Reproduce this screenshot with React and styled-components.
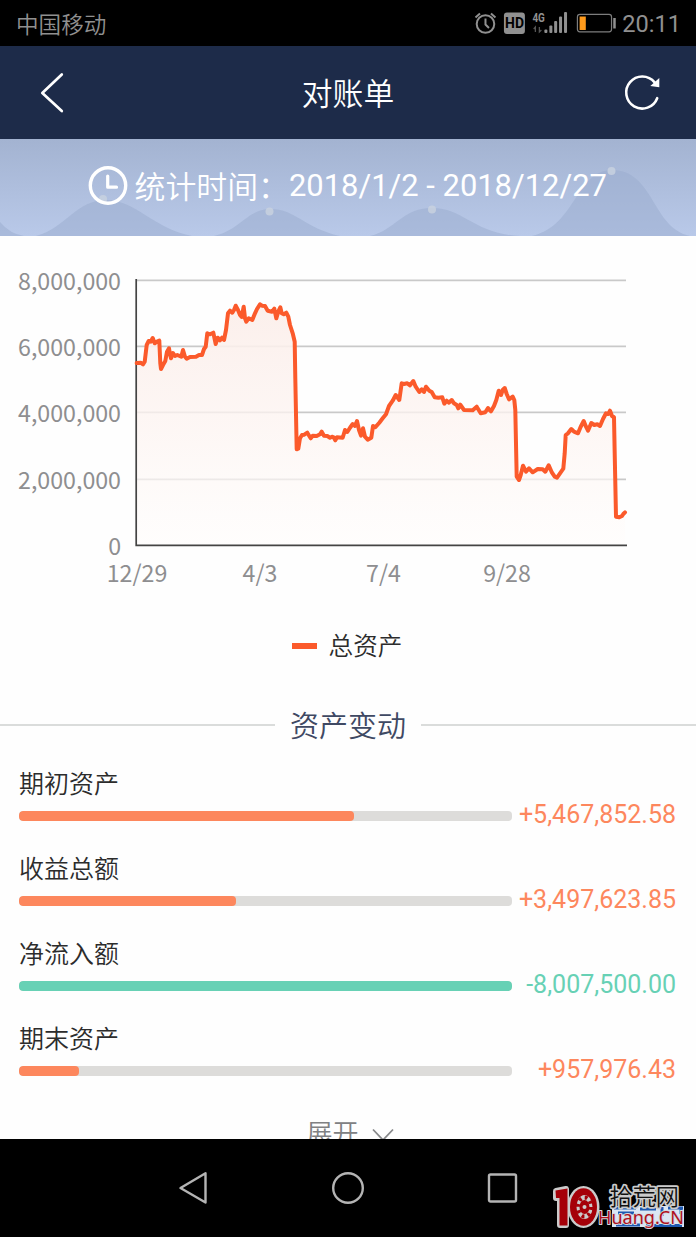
import React from "react";
import styled, { createGlobalStyle } from "styled-components";

const GlobalStyle = createGlobalStyle`
  * { box-sizing: border-box; }
  body {
    margin: 0;
    background: #fefefe;
    font-family: Roboto, "Noto Sans CJK SC", sans-serif;
  }
`;

const Phone = styled.div`
  width: 696px;
  height: 1237px;
  display: flex;
  flex-direction: column;
  overflow: hidden;
  background: #fefefe;
`;

const StatusBar = styled.div`
  flex: none;
  height: 46px;
  padding: 0 15px 0 16px;
  display: flex;
  align-items: center;
  justify-content: space-between;
  background: #000;
  color: #909090;
`;

const Carrier = styled.span`
  height: 45px;
  font: 350 22.6px/46px "Noto Sans CJK SC", sans-serif;
`;

const StatusIcons = styled.div`
  width: 207px;
  display: flex;
  align-items: center;
`;

const Clock = styled.span`
  margin-left: 4.5px;
  font: 400 23.6px/46px Roboto, sans-serif;
  padding-top: 2px;
`;

const Header = styled.header`
  flex: none;
  height: 93px;
  padding: 0 34px 0 38px;
  display: flex;
  align-items: center;
  justify-content: space-between;
  background: #1d2b49;
`;

const HeaderTitle = styled.h1`
  margin: 0;
  color: #fff;
  font: 350 30.8px/91px "Noto Sans CJK SC", sans-serif;
  height: 93px;
`;

const Banner = styled.section`
  flex: none;
  height: 97px;
  position: relative;
  background: linear-gradient(#a3b3d1, #b9c9e9);
`;

const Waves = styled.svg`
  position: absolute;
  inset: 0;
`;

const Period = styled.div`
  position: relative;
  height: 94px;
  padding-left: 88px;
  display: flex;
  align-items: center;
  color: #fff;
  font: 400 30.9px/44px Roboto, "Noto Sans CJK SC", sans-serif;
  white-space: pre;
`;

const PeriodLabel = styled.span`
  width: 154.5px;
  height: 47px;
  margin-left: 6.5px;
  font-family: "Noto Sans CJK SC", sans-serif;
  font-weight: 350;
`;

const Content = styled.main`
  flex: 1;
  min-height: 0;
  overflow: hidden;
`;

const Plot = styled.svg`
  display: block;
  text {
    font: 400 23.2px "Noto Sans CJK SC", sans-serif;
    fill: #8e8e90;
  }
`;

const Legend = styled.div`
  height: 50px;
  margin-top: 17px;
  padding-right: 2px;
  display: flex;
  align-items: center;
  justify-content: center;
  gap: 12px;
  color: #2c2c2c;
  font: 350 24.6px/50px "Noto Sans CJK SC", sans-serif;
`;

const LegendMark = styled.i`
  width: 25px;
  height: 6px;
  margin-top: 4px;
  background: #fb5a2b;
`;

const SectionTitle = styled.div`
  height: 50px;
  margin-top: 30px;
  display: flex;
  align-items: center;
  gap: 15px;
  color: #3f4963;
  font: 350 29px/50px "Noto Sans CJK SC", sans-serif;

  &::before,
  &::after {
    content: "";
    flex: 1;
    height: 2px;
    margin-top: 2px;
    background: #dadcdb;
  }
`;

const Change = styled.div`
  height: 85px;
  padding: 15px 20px 0 19px;
`;

const ChangeLabel = styled.div`
  height: 37px;
  color: #2c2c2c;
  font: 350 25px/36px "Noto Sans CJK SC", sans-serif;
`;

const ChangeLine = styled.div`
  height: 30px;
  display: flex;
  align-items: center;
  justify-content: space-between;
`;

const Track = styled.div`
  width: 493px;
  height: 10px;
  border-radius: 4px;
  overflow: hidden;
  background: #dddcda;
`;

const Fill = styled.div`
  height: 100%;
  border-radius: 4px;
  background: ${(p) => p.$color};
`;

const Amount = styled.span`
  margin-top: -2px;
  color: ${(p) => p.$color};
  font: 400 25px/30px Roboto, sans-serif;
`;

const Expand = styled.div`
  margin-top: 25px;
  padding-left: 4px;
  display: flex;
  justify-content: center;
  align-items: center;
  gap: 13px;
  color: #808183;
  font: 350 26px/36px "Noto Sans CJK SC", sans-serif;
`;

const Chevron = styled.svg`
  margin-top: 6px;
`;

const NavBar = styled.nav`
  flex: none;
  height: 98px;
  position: relative;
  padding: 0 177px 0 178px;
  display: flex;
  align-items: center;
  justify-content: space-between;
  background: #000;
`;

const Watermark = styled.svg`
  position: absolute;
  right: 0;
  bottom: 0;
`;

const ORANGE = "#fd875d";
const GREEN = "#67d1b5";

const changes = [
  { label: "期初资产", amount: "+5,467,852.58", width: 335, color: ORANGE },
  { label: "收益总额", amount: "+3,497,623.85", width: 217, color: ORANGE },
  { label: "净流入额", amount: "-8,007,500.00", width: 493, color: GREEN },
  { label: "期末资产", amount: "+957,976.43", width: 60, color: ORANGE },
];

const yTicks = [
  { y: 280, label: "8,000,000" },
  { y: 346, label: "6,000,000" },
  { y: 412, label: "4,000,000" },
  { y: 479, label: "2,000,000" },
  { y: 545, label: "0" },
];

const xTicks = [
  { x: 137, label: "12/29" },
  { x: 260, label: "4/3" },
  { x: 383.5, label: "7/4" },
  { x: 507, label: "9/28" },
];

// Samples in thirds of a pixel, each run with its own origin.
const runs = [
  [120, 265, "50,294 62,293 69,298 74,290 80,240 86,228 92,230 98,219 104,235 111,230 118,227 121,295 123,312 129,300 136,288 141,260 147,250 150,268 153,280 159,264 165,273 172,270 184,275 189,255 195,275 200,281 210,276 228,275 237,270 246,270 252,252 257,245 262,205 270,208 280,203 287,237 293,218 300,226 306,218 312,225 318,195 324,145 330,137 337,143 342,135 347,122 354,135 360,150 365,156 371,125 375,160 379,170 386,160 397,165 405,145 411,132 420,118 426,122 435,123 443,137 456,140 463,131 469,160 475,140 481,127 485,145 491,148 499,143 505,155 510,180 518,205 524,230 526,340"],
  [290, 370, "20,238 25,236 30,205 36,195 43,194 52,188 62,205 68,197 80,198 90,193 95,185 102,197 112,198 120,203 126,200 131,202 136,211 141,202 158,203 165,180 172,186 180,173 188,162 195,168 201,153 207,180 213,197 219,175 225,200 233,209 244,203 249,168 256,172 268,158 278,145 288,133 297,108 308,92 317,75 328,90 335,40 342,42 352,40 360,46 370,33 377,50 388,66 395,58 402,66 408,50 418,62 425,66 434,82 445,83 457,82 463,101 470,92 477,98"],
  [450, 370, "5,90 12,100 20,105 25,115 31,104 42,120 68,121 80,110 92,130 106,127 114,114 123,124 132,108 139,90 146,62 153,75 158,60 164,54 170,72 177,88 188,80 193,90 196,120 200,320 207,330 212,315 219,287 228,305 237,295 248,307 263,297 278,298 286,305 296,286 306,308 314,320 321,323 330,310 340,296 344,250 347,195 354,190 364,177 372,185 384,190 392,170 401,153 408,170 414,182 424,159 433,165 442,163 450,168 459,147 468,130 475,132 480,122 486,138 492,142 494,250 498,440 508,442 516,438 520,432 525,427"],
];

const linePoints = runs
  .flatMap(([ox, oy, samples]) =>
    samples.split(" ").map((pair) => {
      const [x, y] = pair.split(",").map(Number);
      return `${(ox + x / 3).toFixed(1)},${(oy + y / 3).toFixed(1)}`;
    })
  )
  .join(" ");

function StatusGlyphs() {
  return (
    <svg width="144" height="46" viewBox="474 0 144 46">
      <g fill="none" stroke="#909090" strokeWidth="2">
        <circle cx="485.5" cy="24" r="8.8" />
        <path d="M485.5 18.5V24.5L489 28M475.5 17.5L480 13.5M495.5 17.5L491 13.5" />
      </g>
      <rect x="504" y="12.5" width="21" height="21.5" rx="3" fill="#909090" />
      <text x="514.6" y="28.4" textAnchor="middle" fontFamily="Roboto" fontSize="14" fontWeight="700" fill="#000">HD</text>
      <text x="532.5" y="21.8" fontFamily="Roboto" fontSize="12.5" fontWeight="700" textLength="12.5" lengthAdjust="spacingAndGlyphs" fill="#909090">4G</text>
      <path d="M535.5 32V27L533.8 29M539.5 27V32L541.5 30" fill="none" stroke="#555" strokeWidth="1.3" />
      <g fill="#909090">
        <rect x="544.5" y="29.5" width="3" height="3.5" rx="1" />
        <rect x="549.5" y="25.5" width="3" height="7.5" rx="1" />
        <rect x="554.3" y="21" width="3" height="12" rx="1" />
        <rect x="559.2" y="16.5" width="3" height="16.5" rx="1" />
        <rect x="564.2" y="12" width="3" height="21" rx="1" />
        <rect x="613.5" y="18" width="2.5" height="10.5" />
      </g>
      <rect x="577.6" y="14.4" width="34.2" height="17.4" rx="2.5" fill="none" stroke="#7d7d7d" strokeWidth="1.2" />
      <rect x="579.8" y="16.5" width="6.2" height="13.5" fill="#ff9b1c" />
    </svg>
  );
}

function AssetChart() {
  return (
    <Plot width="696" height="366" viewBox="0 236 696 366">
      <defs>
        <linearGradient id="area" x1="0" y1="300" x2="0" y2="545" gradientUnits="userSpaceOnUse">
          <stop offset="0" stopColor="#fbeeea" stopOpacity=".95" />
          <stop offset=".5" stopColor="#fdf4f1" stopOpacity=".75" />
          <stop offset="1" stopColor="#fffdfc" stopOpacity=".6" />
        </linearGradient>
      </defs>
      {yTicks.slice(0, 4).map((t) => (
        <path key={t.y} d={`M137 ${t.y + 0.3}H626`} stroke="#c9c9c9" strokeWidth="1.7" />
      ))}
      <polygon points={`137,545 ${linePoints} 625,545`} fill="url(#area)" />
      <path d="M136.2 279V545.4H627" fill="none" stroke="#444" strokeWidth="1.7" />
      <polyline points={linePoints} fill="none" stroke="#fb5a2b" strokeWidth="4" strokeLinejoin="round" strokeLinecap="round" />
      {yTicks.map((t) => (
        <text key={t.label} x="121" y={t.y + 9.9} textAnchor="end">{t.label}</text>
      ))}
      {xTicks.map((t) => (
        <text key={t.label} x={t.x} y="582" textAnchor="middle">{t.label}</text>
      ))}
    </Plot>
  );
}

function SiteMark() {
  return (
    <Watermark width="156" height="67" viewBox="540 1170 156 67">
      <path d="M612 1206H684V1227H612Z" fill="#dbe6f3" />
      <path d="M614 1208H636M618 1213H634M640 1209H656M662 1207V1216M668 1208H683M681 1207V1214M616 1225H640M646 1225.5H682" stroke="#1d58b0" strokeWidth="3" fill="none" />
      <g stroke="#cbcbcb" strokeWidth="6" strokeLinejoin="round" fill="#cbcbcb">
        <path d="M556 1191L566 1189V1225H560V1198H556Z" />
        <ellipse cx="583.5" cy="1207" rx="13" ry="18" />
      </g>
      <path d="M555.5 1190.5L567.5 1188.5V1225.5H559.5V1198H556Z" fill="#a50008" />
      <ellipse cx="583.5" cy="1207" rx="13.5" ry="18.7" fill="#a50008" />
      <ellipse cx="584.5" cy="1207" rx="8" ry="12" fill="#cbcbcb" />
      <ellipse cx="584.5" cy="1207" rx="6.5" ry="9.5" fill="none" stroke="#a50008" strokeWidth="4" strokeDasharray="2.8 3.5" />
      <ellipse cx="584.5" cy="1207" rx="5" ry="7" fill="#a50008" />
      <circle cx="584.5" cy="1207" r="2" fill="#cbcbcb" />
      <text x="609.5" y="1205" fontFamily="Noto Sans CJK SC" fontSize="23.2" fontWeight="350" fill="#111" stroke="#cbcbcb" strokeWidth="3.5" strokeLinejoin="round" paintOrder="stroke">拾荒网</text>
      <text x="598" y="1224" fontFamily="Noto Sans" fontSize="18.5" textLength="86" lengthAdjust="spacingAndGlyphs" fill="#b0101c" stroke="#d4d8df" strokeWidth="2" strokeLinejoin="round" style={{ paintOrder: "stroke" }}>Huang.CN</text>
    </Watermark>
  );
}

export default function App() {
  return (
    <Phone>
      <GlobalStyle />
      <StatusBar>
        <Carrier>中国移动</Carrier>
        <StatusIcons>
          <StatusGlyphs />
          <Clock>20:11</Clock>
        </StatusIcons>
      </StatusBar>
      <Header>
        <svg width="36" height="44" viewBox="38 71 36 44" fill="none" stroke="#fff" strokeWidth="2.7" strokeLinecap="round" strokeLinejoin="round">
          <path d="M61.8 74.5L42.3 93L61.8 111" />
        </svg>
        <HeaderTitle>对账单</HeaderTitle>
        <svg width="40" height="44" viewBox="622 71 40 44">
          <path d="M657.2 98.2A16 16 0 1 1 654.6 82.4" fill="none" stroke="#fff" strokeWidth="2.6" strokeLinecap="round" />
          <path d="M659.3 78V87.3L650.3 86Z" fill="#fff" />
        </svg>
      </Header>
      <Banner>
        <Waves width="696" height="97" viewBox="0 139 696 97">
          <g fill="#9aaccd" fillOpacity=".5">
            <path d="M0 222Q10 234 24 236H0Z" />
            <path d="M36 236C66 228 76 200 106 200C136 200 152 228 192 236Z" />
            <path d="M214 236C240 230 248 209 270 209C296 209 304 228 340 236Z" />
            <path d="M370 236C396 230 402 208 432 208C464 208 474 234 520 236Z" />
            <path d="M532 236C576 226 576 170 612 170C654 170 652 228 690 236Z" />
          </g>
          <g fill="#c8d1df" fillOpacity=".85">
            <circle cx="103" cy="199" r="4" />
            <circle cx="269.5" cy="211.5" r="4" />
            <circle cx="432" cy="209.5" r="4" />
            <circle cx="611.5" cy="171" r="4" />
          </g>
        </Waves>
        <Period>
          <svg width="40" height="40" viewBox="0 0 40 40" fill="none" stroke="#fff">
            <circle cx="20" cy="19.5" r="17.7" strokeWidth="3.4" />
            <path d="M19.7 10V21.2H28.5" strokeWidth="3.2" strokeLinecap="round" strokeLinejoin="round" />
          </svg>
          <PeriodLabel>统计时间：</PeriodLabel>
          <span>2018/1/2 - 2018/12/27</span>
        </Period>
      </Banner>
      <Content>
        <AssetChart />
        <Legend>
          <LegendMark />
          总资产
        </Legend>
        <SectionTitle>资产变动</SectionTitle>
        {changes.map((c) => (
          <Change key={c.label}>
            <ChangeLabel>{c.label}</ChangeLabel>
            <ChangeLine>
              <Track>
                <Fill $color={c.color} style={{ width: c.width }} />
              </Track>
              <Amount $color={c.color}>{c.amount}</Amount>
            </ChangeLine>
          </Change>
        ))}
        <Expand>
          展开
          <Chevron width="22" height="14" viewBox="0 0 22 14" fill="none" stroke="#88898b" strokeWidth="1.8">
            <path d="M1 1.5L11 12L21 1.5" />
          </Chevron>
        </Expand>
      </Content>
      <NavBar>
        <svg width="30" height="34" viewBox="0 0 30 34" fill="none" stroke="#b4b4b4" strokeWidth="2.4" strokeLinejoin="round">
          <path d="M27.5 2.2V31.5L2.5 17Z" />
        </svg>
        <svg width="34" height="34" viewBox="0 0 34 34" fill="none" stroke="#b4b4b4" strokeWidth="2.4">
          <circle cx="17" cy="17" r="14.8" />
        </svg>
        <svg width="32" height="34" viewBox="0 0 32 34" fill="none" stroke="#b4b4b4" strokeWidth="2.4">
          <rect x="2" y="3.5" width="27" height="27" rx="1.5" />
        </svg>
        <SiteMark />
      </NavBar>
    </Phone>
  );
}
